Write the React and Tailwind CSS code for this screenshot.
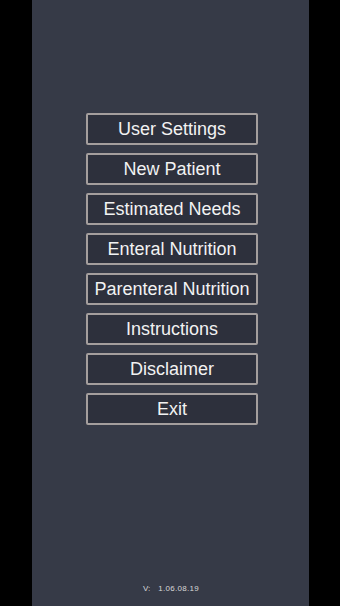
import React from "react";

const items = [
  "User Settings",
  "New Patient",
  "Estimated Needs",
  "Enteral Nutrition",
  "Parenteral Nutrition",
  "Instructions",
  "Disclaimer",
  "Exit",
];

export default function App() {
  return (
    <div
      className="w-[340px] h-[606px] bg-black flex justify-center"
      style={{ fontFamily: '"Liberation Sans", Arial, sans-serif' }}
    >
      <div className="w-[277px] h-full bg-[#363a47] flex flex-col items-center">
        <div className="mt-[113px] ml-[4px] flex flex-col gap-[8px]">
          {items.map((t) => (
            <button
              key={t}
              className="w-[172px] h-[32px] border-2 border-[#a49e9d] bg-[#2d303c] rounded-[2px] text-[#f2f2f2] text-[18px] leading-none flex items-center justify-center"
            >
              {t}
            </button>
          ))}
        </div>
        <div className="mt-auto mb-[11px] flex items-center gap-[8px] text-[8px] text-[#d8d8d8] ml-[2px]">
          <span>V:</span>
          <span className="tracking-[0.3px]">1.06.08.19</span>
        </div>
      </div>
    </div>
  );
}
